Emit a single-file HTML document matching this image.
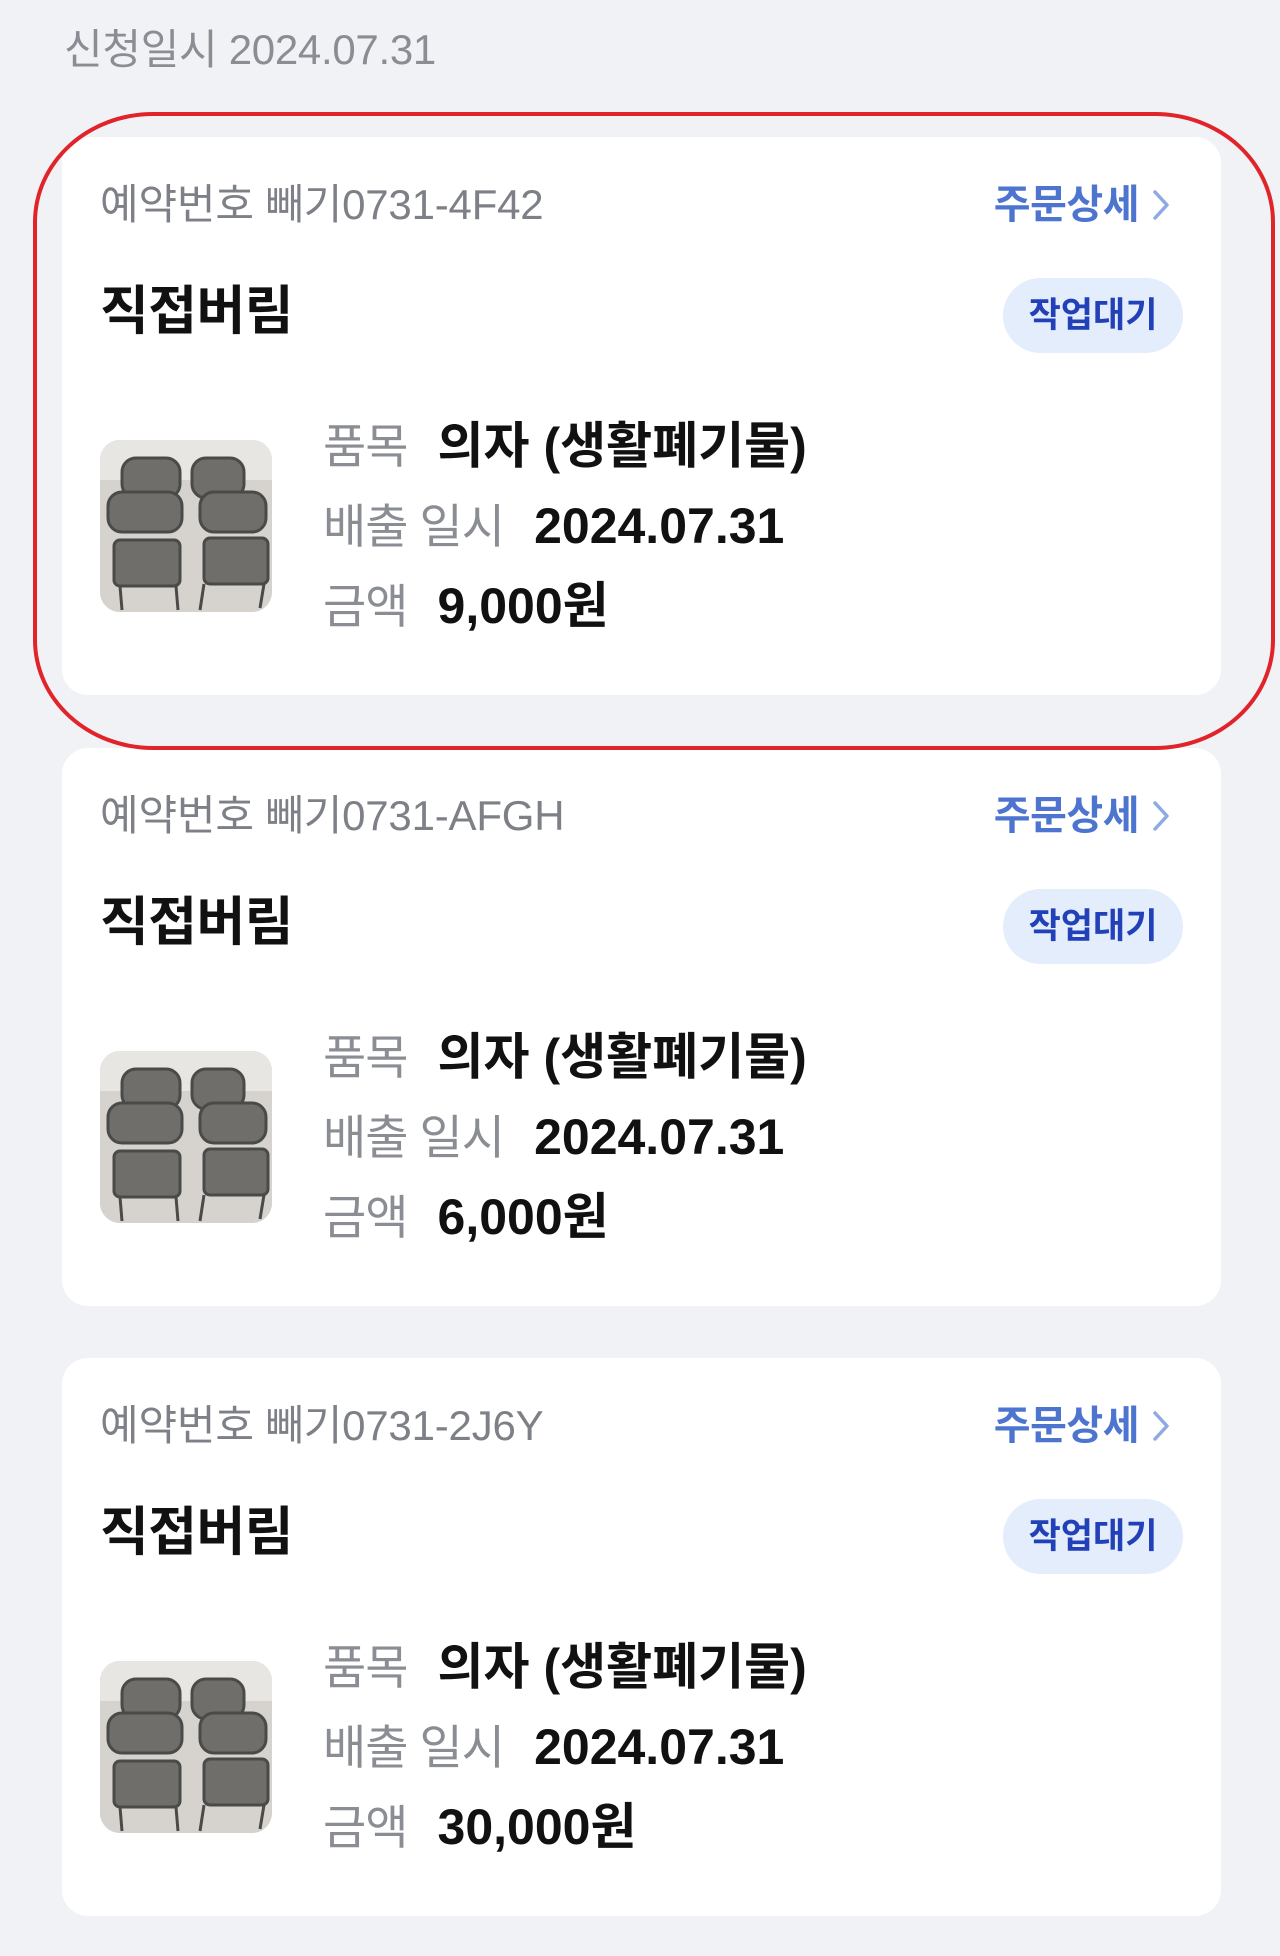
<!DOCTYPE html>
<html><head><meta charset="utf-8"><style>
*{margin:0;padding:0;box-sizing:border-box}
body{width:1280px;height:1956px;background:#f1f2f6;position:relative;overflow:hidden;font-family:"Liberation Sans","Noto Sans CJK KR",sans-serif}
.hdr{position:absolute;left:64px;top:24px;font-size:42px;color:#8a8d93;line-height:52px;letter-spacing:-0.3px}
.card{position:absolute;left:62px;width:1159px;height:558px;background:#fff;border-radius:26px}
.no{position:absolute;left:38px;top:44px;font-size:42px;color:#7d8086;line-height:48px;letter-spacing:-0.2px}
.det{position:absolute;right:50px;top:44px;font-size:40px;color:#4d75d0;line-height:48px;font-weight:bold;letter-spacing:-0.5px;display:flex;align-items:center}
.det svg{margin-left:12px}
.title{position:absolute;left:38px;top:143px;font-size:53px;font-weight:bold;color:#111;line-height:64px;letter-spacing:-0.5px}
.badge{position:absolute;left:941px;top:141px;width:180px;height:75px;border-radius:38px;background:#e3edfb;color:#2240b8;font-weight:bold;font-size:35px;line-height:75px;text-align:center}
.img{position:absolute;left:38px;top:303px;width:172px;height:172px;border-radius:20px;overflow:hidden;background:#d9d7d2}
.row{position:absolute;left:261px;font-size:47px;line-height:60px;color:#8a8d93;white-space:nowrap;letter-spacing:-1px}
.row b{color:#111;margin-left:18px;font-size:50px;letter-spacing:0}
.ell{position:absolute;left:33px;top:112px;width:1242px;height:638px;border:4px solid #e0242a;border-radius:120px/110px}
</style></head><body>
<div class="hdr">신청일시 2024.07.31</div>

<div class="card" style="top:137px">
<div class="no">예약번호 빼기0731-4F42</div>
<div class="det">주문상세<svg width="20" height="34" viewBox="0 0 20 34"><path d="M4 4 L16 17 L4 30" fill="none" stroke="#8fa9e2" stroke-width="3.5" stroke-linecap="round" stroke-linejoin="round"/></svg></div>
<div class="title">직접버림</div>
<div class="badge">작업대기</div>
<div class="img"><svg width="172" height="172" viewBox="0 0 172 172"><rect width="172" height="172" fill="#d6d3ce"/><rect x="0" y="0" width="172" height="40" fill="#e8e6e2"/><g fill="#6f6e6b" stroke="#4a4a48" stroke-width="3"><rect x="22" y="18" width="58" height="40" rx="14"/><rect x="92" y="18" width="52" height="40" rx="14"/><rect x="8" y="52" width="74" height="40" rx="14"/><rect x="100" y="52" width="66" height="40" rx="14"/><rect x="14" y="100" width="66" height="46" rx="6"/><rect x="104" y="98" width="64" height="46" rx="6"/></g><g stroke="#4a4a48" stroke-width="3"><line x1="20" y1="146" x2="22" y2="170"/><line x1="76" y1="146" x2="78" y2="170"/><line x1="104" y1="144" x2="100" y2="170"/><line x1="164" y1="144" x2="160" y2="168"/></g></svg></div>
<div class="row" style="top:279px">품목 <b>의자 (생활폐기물)</b></div>
<div class="row" style="top:359px">배출 일시 <b>2024.07.31</b></div>
<div class="row" style="top:439px">금액 <b>9,000원</b></div>
</div>

<div class="card" style="top:748px">
<div class="no">예약번호 빼기0731-AFGH</div>
<div class="det">주문상세<svg width="20" height="34" viewBox="0 0 20 34"><path d="M4 4 L16 17 L4 30" fill="none" stroke="#8fa9e2" stroke-width="3.5" stroke-linecap="round" stroke-linejoin="round"/></svg></div>
<div class="title">직접버림</div>
<div class="badge">작업대기</div>
<div class="img"><svg width="172" height="172" viewBox="0 0 172 172"><rect width="172" height="172" fill="#d6d3ce"/><rect x="0" y="0" width="172" height="40" fill="#e8e6e2"/><g fill="#6f6e6b" stroke="#4a4a48" stroke-width="3"><rect x="22" y="18" width="58" height="40" rx="14"/><rect x="92" y="18" width="52" height="40" rx="14"/><rect x="8" y="52" width="74" height="40" rx="14"/><rect x="100" y="52" width="66" height="40" rx="14"/><rect x="14" y="100" width="66" height="46" rx="6"/><rect x="104" y="98" width="64" height="46" rx="6"/></g><g stroke="#4a4a48" stroke-width="3"><line x1="20" y1="146" x2="22" y2="170"/><line x1="76" y1="146" x2="78" y2="170"/><line x1="104" y1="144" x2="100" y2="170"/><line x1="164" y1="144" x2="160" y2="168"/></g></svg></div>
<div class="row" style="top:279px">품목 <b>의자 (생활폐기물)</b></div>
<div class="row" style="top:359px">배출 일시 <b>2024.07.31</b></div>
<div class="row" style="top:439px">금액 <b>6,000원</b></div>
</div>

<div class="card" style="top:1358px">
<div class="no">예약번호 빼기0731-2J6Y</div>
<div class="det">주문상세<svg width="20" height="34" viewBox="0 0 20 34"><path d="M4 4 L16 17 L4 30" fill="none" stroke="#8fa9e2" stroke-width="3.5" stroke-linecap="round" stroke-linejoin="round"/></svg></div>
<div class="title">직접버림</div>
<div class="badge">작업대기</div>
<div class="img"><svg width="172" height="172" viewBox="0 0 172 172"><rect width="172" height="172" fill="#d6d3ce"/><rect x="0" y="0" width="172" height="40" fill="#e8e6e2"/><g fill="#6f6e6b" stroke="#4a4a48" stroke-width="3"><rect x="22" y="18" width="58" height="40" rx="14"/><rect x="92" y="18" width="52" height="40" rx="14"/><rect x="8" y="52" width="74" height="40" rx="14"/><rect x="100" y="52" width="66" height="40" rx="14"/><rect x="14" y="100" width="66" height="46" rx="6"/><rect x="104" y="98" width="64" height="46" rx="6"/></g><g stroke="#4a4a48" stroke-width="3"><line x1="20" y1="146" x2="22" y2="170"/><line x1="76" y1="146" x2="78" y2="170"/><line x1="104" y1="144" x2="100" y2="170"/><line x1="164" y1="144" x2="160" y2="168"/></g></svg></div>
<div class="row" style="top:279px">품목 <b>의자 (생활폐기물)</b></div>
<div class="row" style="top:359px">배출 일시 <b>2024.07.31</b></div>
<div class="row" style="top:439px">금액 <b>30,000원</b></div>
</div>

<div class="ell"></div>
</body></html>
